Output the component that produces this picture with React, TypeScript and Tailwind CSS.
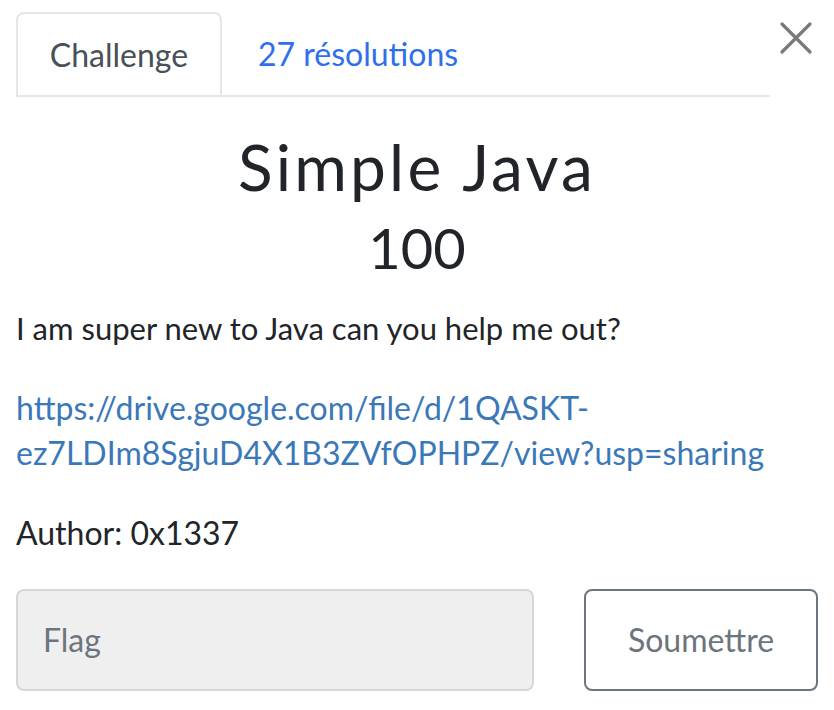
import React from "react";

export default function App() {
  return (
    <div className="relative w-[834px] h-[710px] bg-white overflow-hidden text-[#212529]" style={{ fontFamily: "Lato, 'Open Sans', sans-serif" }}>
      <button className="absolute left-[778px] top-[20px] w-[36px] h-[36px] flex items-center justify-center">
        <svg width="34" height="34" viewBox="0 0 34 34">
          <path d="M3 3 L31 31 M31 3 L3 31" stroke="#7a7a7a" strokeWidth="3.2" strokeLinecap="round" />
        </svg>
      </button>
      <div className="ml-[16px] mt-[12px] w-[754px] flex border-b-2 border-[#e4e7ea]">
        <div className="w-[206px] h-[83px] border-2 border-b-0 border-[#e4e7ea] rounded-t-[8px] flex items-center justify-center text-[32px] text-[#495057] -mb-[2px] bg-white">
          Challenge
        </div>
        <div className="h-[83px] pl-[36px] flex items-center text-[32px] text-[#2f6fed]">27 résolutions</div>
      </div>
      <div className="px-[16px]">
        <h2 className="mt-[38px] text-center text-[64px] leading-[64px] tracking-[3.2px] font-normal text-[#212529]">Simple Java</h2>
        <h3 className="mt-[19px] text-center text-[56px] leading-[60px] font-normal">100</h3>
        <p className="mt-[28px] text-[31px] leading-[45px]">I am super new to Java can you help me out?</p>
        <p className="mt-[34px] text-[32px] leading-[45px] text-[#3b78b8]">
          https://drive.google.com/file/d/1QASKT-<br />ez7LDIm8SgjuD4X1B3ZVfOPHPZ/view?usp=sharing
        </p>
        <p className="mt-[35px] text-[32px] leading-[45px]">Author: 0x1337</p>
        <div className="mt-[34px] flex gap-[50px]">
          <div className="w-[518px] h-[102px] bg-[#efefef] border-2 border-[#d5d8da] rounded-[8px] flex items-center pl-[25px] text-[32px] text-[#6c757d]">
            Flag
          </div>
          <div className="w-[234px] h-[102px] border-2 border-[#6c757d] rounded-[8px] flex items-center justify-center text-[32px] text-[#6c757d]">
            Soumettre
          </div>
        </div>
      </div>
    </div>
  );
}
